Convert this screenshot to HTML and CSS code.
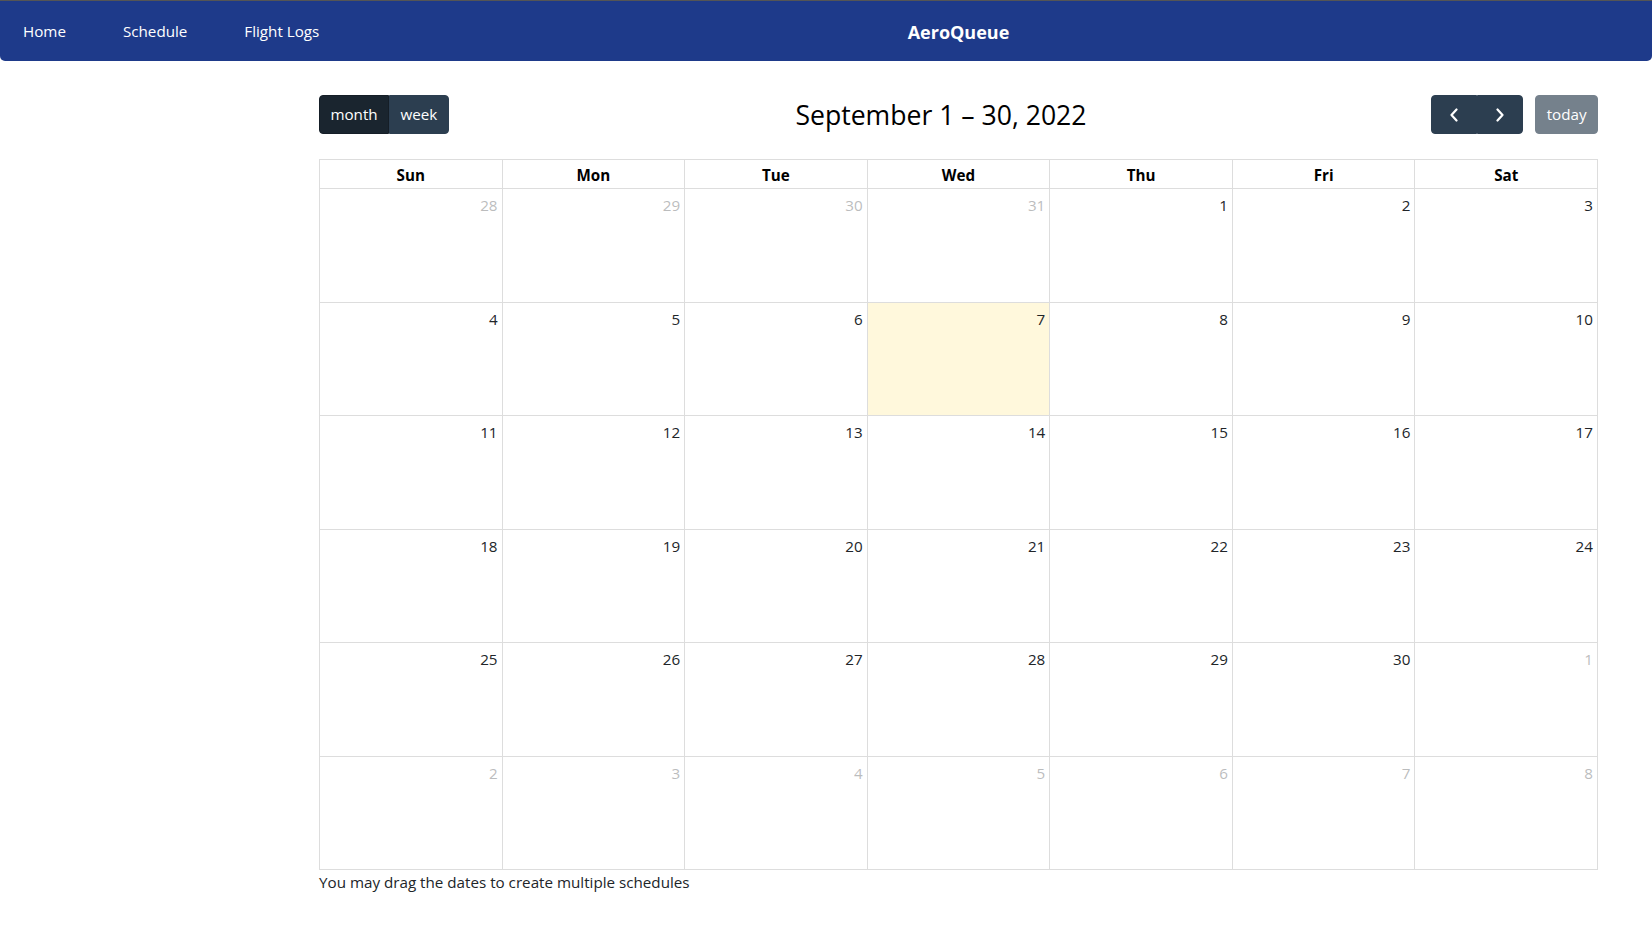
FILE: index.html
```html
<!DOCTYPE html>
<html lang="en">
<head>
<meta charset="utf-8">
<title>AeroQueue</title>
<link rel="stylesheet" href="styles.css">
</head>
<body>
<nav class="navbar">
  <div class="nav-links">
    <a class="nav-link" href="#">Home</a>
    <a class="nav-link" href="#">Schedule</a>
    <a class="nav-link" href="#">Flight Logs</a>
  </div>
  <div class="brand">AeroQueue</div>
</nav>
<main class="page">
  <section class="calendar">
    <div class="toolbar">
      <div class="btn-group">
        <button class="btn btn-active">month</button>
        <button class="btn">week</button>
      </div>
      <h2 class="title">September 1 – 30, 2022</h2>
      <div class="toolbar-right">
        <div class="btn-group">
          <button class="btn btn-icon" aria-label="prev"><svg width="8" height="14" viewBox="0 0 8 14"><polyline points="6.5,1.5 1.5,7 6.5,12.5" fill="none" stroke="#fff" stroke-width="2.2" stroke-linecap="round" stroke-linejoin="round"/></svg></button>
          <button class="btn btn-icon" aria-label="next"><svg width="8" height="14" viewBox="0 0 8 14"><polyline points="1.5,1.5 6.5,7 1.5,12.5" fill="none" stroke="#fff" stroke-width="2.2" stroke-linecap="round" stroke-linejoin="round"/></svg></button>
        </div>
        <button class="btn btn-disabled">today</button>
      </div>
    </div>
    <div class="grid">
      <div class="head">Sun</div><div class="head">Mon</div><div class="head">Tue</div><div class="head">Wed</div><div class="head">Thu</div><div class="head">Fri</div><div class="head">Sat</div>

      <div class="day other"><span>28</span></div><div class="day other"><span>29</span></div><div class="day other"><span>30</span></div><div class="day other"><span>31</span></div><div class="day"><span>1</span></div><div class="day"><span>2</span></div><div class="day"><span>3</span></div>

      <div class="day"><span>4</span></div><div class="day"><span>5</span></div><div class="day"><span>6</span></div><div class="day today"><span>7</span></div><div class="day"><span>8</span></div><div class="day"><span>9</span></div><div class="day"><span>10</span></div>

      <div class="day"><span>11</span></div><div class="day"><span>12</span></div><div class="day"><span>13</span></div><div class="day"><span>14</span></div><div class="day"><span>15</span></div><div class="day"><span>16</span></div><div class="day"><span>17</span></div>

      <div class="day"><span>18</span></div><div class="day"><span>19</span></div><div class="day"><span>20</span></div><div class="day"><span>21</span></div><div class="day"><span>22</span></div><div class="day"><span>23</span></div><div class="day"><span>24</span></div>

      <div class="day"><span>25</span></div><div class="day"><span>26</span></div><div class="day"><span>27</span></div><div class="day"><span>28</span></div><div class="day"><span>29</span></div><div class="day"><span>30</span></div><div class="day other"><span>1</span></div>

      <div class="day other"><span>2</span></div><div class="day other"><span>3</span></div><div class="day other"><span>4</span></div><div class="day other"><span>5</span></div><div class="day other"><span>6</span></div><div class="day other"><span>7</span></div><div class="day other"><span>8</span></div>
    </div>
    <p class="hint">You may drag the dates to create multiple schedules</p>
  </section>
</main>
</body>
</html>
```

FILE: styles.css
```css
* { box-sizing: border-box; }

html, body {
  margin: 0;
  padding: 0;
  background: #fff;
}

body {
  font-family: "Segoe UI", "Open Sans", "Noto Sans", sans-serif;
  font-size: 15.2px;
  color: #212529;
}

.navbar {
  display: grid;
  grid-template-columns: 319px 1279px;
  align-items: center;
  height: 61px;
  border-top: 1px solid #555;
  background: #1e3a8a;
  border-radius: 0 0 5px 5px;
}

.nav-links {
  display: flex;
  align-items: center;
  gap: 57px;
  padding-left: 23px;
}

.nav-link {
  color: #fff;
  text-decoration: none;
  font-size: 15.2px;
  white-space: nowrap;
}

.brand {
  justify-self: center;
  color: #fff;
  font-weight: 700;
  font-size: 18px;
  padding-top: 1px;
}

.page {
  padding: 34px 54px 0 319px;
}

.calendar {
  width: 1279px;
}

.toolbar {
  display: flex;
  justify-content: space-between;
  align-items: center;
  margin-bottom: 25px;
}

.toolbar-right {
  display: flex;
  gap: 12px;
}

.title {
  margin: 0;
  font-size: 26.6px;
  font-weight: 400;
  color: #000;
  padding-left: 2px;
  padding-top: 1px;
}

.btn-group {
  display: flex;
}

.btn {
  font-family: inherit;
  font-size: 15.2px;
  line-height: 1.5;
  padding: 6px 10.4px;
  border: 1px solid #2c3e50;
  background: #2c3e50;
  color: #fff;
  border-radius: 4px;
  cursor: pointer;
  height: 39px;
}

.btn-group .btn { border-radius: 0; }
.btn-group .btn:first-child { border-radius: 4px 0 0 4px; }
.btn-group .btn:last-child { border-radius: 0 4px 4px 0; }

.btn-active {
  background: #1a252f;
  border-color: #151e27;
}

.btn-icon {
  width: 46px;
  display: flex;
  align-items: center;
  justify-content: center;
}

.btn-disabled {
  opacity: 0.65;
}

.grid {
  display: grid;
  grid-template-columns: repeat(7, 1fr);
  grid-template-rows: 29px repeat(6, 113.5px);
  border-top: 1px solid #ddd;
  border-left: 1px solid #ddd;
}

.head,
.day {
  border-right: 1px solid #ddd;
  border-bottom: 1px solid #ddd;
}

.head {
  text-align: center;
  font-weight: 700;
  color: #000;
  padding: 3px 4px 1px;
  line-height: 24px;
}

.day {
  display: flex;
  justify-content: flex-end;
  align-items: flex-start;
}

.day span {
  padding: 6px 4px 4px;
  color: #212529;
}

.day.other span {
  color: #212529;
  opacity: 0.3;
}

.today {
  background: #fff8dc;
}

.hint {
  margin: 0;
  padding-top: 2px;
}
```
